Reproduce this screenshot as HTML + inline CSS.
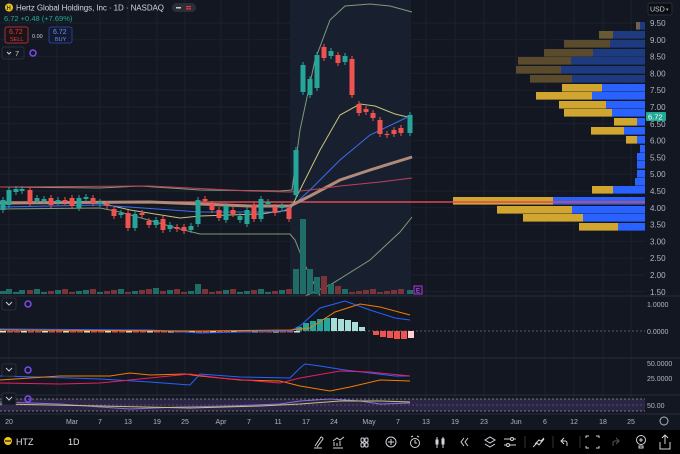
<!DOCTYPE html>
<html><head><meta charset="utf-8"><style>
html,body{margin:0;padding:0;background:#131722;width:680px;height:454px;overflow:hidden;font-family:"Liberation Sans",sans-serif}
svg{display:block}
text{font-family:"Liberation Sans",sans-serif}
</style></head><body>
<svg id="s" width="680" height="454" viewBox="0 0 680 454">
<rect width="680" height="454" fill="#131722"/>
<g id="grid" stroke="#1b202c" stroke-width="1"></g>
<rect x="290" y="0" width="121" height="296" fill="#182030"/>
<g id="vp"></g>
<line x1="0" y1="202" x2="645" y2="202" stroke="#e0494f" stroke-width="1.5"/>
<g id="lines" fill="none"></g>
<g id="vol"></g>
<g id="cdl"></g>
<g stroke="#2a2e39"><line x1="0" y1="296" x2="680" y2="296"/><line x1="0" y1="358" x2="680" y2="358"/><line x1="0" y1="395" x2="680" y2="395"/><line x1="0" y1="414" x2="680" y2="414"/></g>
<line x1="0" y1="331" x2="645" y2="331" stroke="#555a66" stroke-dasharray="2,2"/>
<g id="macd"></g>
<rect x="0" y="399" width="645" height="12" fill="#2a2445"/>
<g stroke="#777" stroke-dasharray="2,2"><line x1="0" y1="399" x2="645" y2="399"/><line x1="0" y1="411" x2="645" y2="411"/><line x1="0" y1="405" x2="645" y2="405" stroke="#555"/></g>
<g id="low" fill="none"></g>
<g fill="#b2b5be" font-size="8" id="ax"></g>
<rect x="646" y="112" width="20" height="9" fill="#22ab94" rx="1"/>
<text x="648" y="119.5" font-size="7.5" fill="#fff">6.72</text>
<rect x="648" y="3" width="24" height="12" fill="#0b0d12" stroke="#2a2e39" rx="2"/>
<text x="650" y="11.5" font-size="7" fill="#d1d4dc">USD</text><text x="666" y="11" font-size="5" fill="#aaa">▾</text>
<circle cx="9" cy="7.5" r="4" fill="#f0c419"/><text x="6.5" y="9.8" font-size="6" fill="#333" font-weight="bold">H</text>
<text x="16" y="10.5" font-size="8" fill="#d1d4dc" textLength="148">Hertz Global Holdings, Inc · 1D · NASDAQ</text>
<rect x="172" y="3" width="24" height="9" rx="4.5" fill="#2a2e39"/><rect x="176" y="7" width="5" height="1.5" fill="#ccc"/><rect x="186" y="6" width="5" height="1.2" fill="#f23645"/><rect x="186" y="8.3" width="5" height="1.2" fill="#f23645"/>
<text x="4" y="21" font-size="7.5" fill="#22ab94">6.72  +0.48 (+7.69%)</text>
<rect x="5" y="27" width="23" height="16" rx="2" fill="#1a1416" stroke="#a0323a"/>
<text x="9" y="34" font-size="7" fill="#f23645">6.72</text><text x="10" y="41" font-size="5.5" fill="#f23645">SELL</text>
<text x="32" y="38" font-size="5.5" fill="#ccc">0.00</text>
<rect x="49" y="27" width="23" height="16" rx="2" fill="#131a2e" stroke="#2a3f8f"/>
<text x="53" y="34" font-size="7" fill="#6f8ff5">6.72</text><text x="55" y="41" font-size="5.5" fill="#6f8ff5">BUY</text>
<rect x="2" y="47" width="22" height="12" rx="2" fill="none" stroke="#2a2e39"/>
<path d="M7 52 l2 2 l2 -2" stroke="#ccc" fill="none"/><text x="15" y="56" font-size="7.5" fill="#ccc">7</text>
<circle cx="33" cy="53" r="3" fill="none" stroke="#7b4cf0" stroke-width="1.5"/>
<g id="pnl"></g>
<rect x="414" y="286" width="8" height="8" fill="#2a1040" stroke="#a040d0"/><text x="416" y="292.5" font-size="6" fill="#c080ff">E</text>
<rect x="0" y="430" width="680" height="24" fill="#000"/>
<circle cx="8" cy="441" r="4" fill="#f0c419"/><rect x="5" y="440.3" width="6" height="1.4" fill="#333"/>
<text x="16" y="445" font-size="9" fill="#e0e3eb">HTZ</text>
<text x="68" y="445" font-size="9" fill="#e0e3eb">1D</text>
<g stroke="#d1d4dc" fill="none" stroke-width="1" id="tb"></g>
</svg>
<script>
const ns="http://www.w3.org/2000/svg";
function el(p,t,a){const e=document.createElementNS(ns,t);for(const k in a)e.setAttribute(k,a[k]);p.appendChild(e);return e;}
const $=id=>document.getElementById(id);
const Y=p=>23+(9.5-p)*33.6;
const g=$("grid");
[9,57,100,128,157,185,221,249,278,306,334,369,398,426,455,484,516,545,574,603,631].forEach(x=>el(g,"line",{x1:x,y1:0,x2:x,y2:414}));
for(let p=1.5;p<=9.5;p+=0.5)el(g,"line",{x1:0,y1:Y(p),x2:645,y2:Y(p)});
const ax=$("ax");
for(let p=1.5;p<=9.51;p+=0.5){el(ax,"text",{x:650,y:Y(p)+3}).textContent=p.toFixed(2);}
[["1.0000",307],["0.0000",334],["50.0000",366],["25.0000",381],["50.00",408]].forEach(a=>el(ax,"text",{x:647,y:a[1],"font-size":7}).textContent=a[0]);
[["20",9],["Mar",72],["7",100],["13",128],["19",157],["25",185],["Apr",221],["7",249],["11",278],["17",306],["24",334],["May",369],["7",398],["13",426],["19",455],["23",484],["Jun",516],["6",545],["12",574],["18",603],["25",631]].forEach(a=>{const t=el(ax,"text",{x:a[1],y:424,"text-anchor":"middle","font-size":7});t.textContent=a[0];});
el(ax,"circle",{cx:664,cy:421,r:4,fill:"none",stroke:"#b2b5be"});
const vp=$("vp");
const rows=[[22,636,640,"#6b6255","#1e3a80"],[31,599,613,"#6a5a33","#1e3a80"],[40,564,610,"#5a4b2d","#1e3a80"],[49,544,593,"#5a4b2d","#1e3a80"],[57,518,571,"#5a4b2d","#1e3a80"],[66,516,561,"#5a4b2d","#1e3a80"],[75,530,572,"#5a4b2d","#1e3a80"],[84,562,602,"#d0a530","#2962ff"],[92,536,592,"#d0a530","#2962ff"],[101,559,606,"#d0a530","#2962ff"],[109,564,612,"#d0a530","#2962ff"],[118,614,637,"#d0a530","#2962ff"],[127,591,624,"#d0a530","#2962ff"],[136,626,637,"#d0a530","#2962ff"],[145,640,640,"#d0a530","#2962ff"],[153,637,637,"#d0a530","#2962ff"],[161,637,637,"#d0a530","#2962ff"],[170,637,637,"#d0a530","#2962ff"],[178,635,635,"#d0a530","#2962ff"],[186,592,613,"#d0a530","#2962ff"],[197,453,553,"#d0a530","#2962ff"],[206,497,572,"#d0a530","#2962ff"],[214,523,583,"#d0a530","#2962ff"],[223,579,618,"#d0a530","#2962ff"]];
rows.forEach(r=>{el(vp,"rect",{x:r[1],y:r[0],width:r[2]-r[1],height:7.6,fill:r[3]});el(vp,"rect",{x:r[2],y:r[0],width:645-r[2],height:7.6,fill:r[4]});});
const C=[[3,200,210,1],[9,190,205,1],[16,189,192,1],[22,189,191,1],[30,190,203,0],[37,198,201,1],[44,199,201,1],[51,198,205,0],[58,200,202,1],[65,200,202,0],[72,198,206,0],[79,198,208,1],[86,197,199,1],[93,198,203,0],[100,202,204,1],[107,204,206,0],[114,209,216,0],[121,213,215,1],[128,213,228,0],[135,214,228,1],[142,213,215,0],[149,221,225,0],[156,220,225,1],[163,219,230,0],[170,225,229,1],[177,227,229,0],[184,227,231,0],[191,226,230,1],[198,200,224,1],[205,199,201,0],[212,204,210,0],[219,210,218,0],[226,206,220,1],[233,210,214,0],[240,216,220,1],[247,210,224,1],[254,205,219,0],[261,199,219,1],[268,202,204,1],[275,207,213,0],[282,206,208,1],[289,208,219,0],[296,150,195,1],[303,65,92,1],[310,79,95,1],[317,55,88,1],[324,47,58,0],[331,51,56,1],[338,55,63,0],[345,56,62,1],[352,59,95,0],[359,104,113,0],[366,109,112,0],[373,113,118,0],[380,120,134,0],[387,134,135,0],[394,130,134,0],[401,128,133,0],[410,115,133,1]];
const cd=$("cdl"),vo=$("vol");
const big={296:25,303:75,310:25,317:17,324:18,331:10,338:8,198:10,156:6,289:5};
C.forEach(c=>{const col=c[3]?"#26a69a":"#ef5350";
el(cd,"line",{x1:c[0],x2:c[0],y1:c[1]-3,y2:c[2]+3,stroke:col});
el(cd,"rect",{x:c[0]-2.5,y:c[1],width:5,height:Math.max(1,c[2]-c[1]),fill:col});
const h=big[c[0]]||(2+((c[0]*7)%4));
el(vo,"rect",{x:c[0]-3,y:294-h,width:6,height:h,fill:c[3]?"#1f6d66":"#7a3438"});});
const L=$("lines");
function pl(pts,col,w){el(L,"polyline",{points:pts,stroke:col,"stroke-width":w||1});}
pl("0,187 100,188 140,186 200,190 280,191 292,190 300,130 315,60 330,20 345,6 370,4 390,6 412,12","#7e9a7a");
pl("0,209 100,208 120,212 180,229 200,234 290,234 295,240 305,265 320,296","#7e9a7a");
pl("305,296 330,285 370,260 400,232 412,217","#7e9a7a");
pl("0,203 100,203 130,210 180,218 200,216 260,214 290,210 300,190 320,150 340,115 360,104 375,106 395,114 412,118","#c8c27a");
pl("0,207 100,205 200,212 280,212 290,208 310,190 340,160 370,135 412,115","#3b6ef5");
pl("0,203 150,202 250,206 290,206 310,196 340,180 370,170 412,157","#b08b7a",3);
pl("0,187 150,186 250,191 290,192 310,190 340,186 380,182 412,178","#c0405a");
const m=$("macd");
for(let x=0;x<300;x+=7){el(m,"rect",{x:x,y:331,width:6,height:1.5,fill:(x/7)%3?"#c05060":"#ddd"});}
[[296,4],[303,8],[310,10],[317,12],[324,13],[331,13],[338,12],[345,11],[352,9],[359,4]].forEach((b,i)=>el(m,"rect",{x:b[0],y:331-b[1],width:6,height:b[1],fill:i<5?"#26a69a":"#a8dcd6"}));
[[373,4],[380,6],[387,7],[394,8],[401,8],[408,7]].forEach((b,i)=>el(m,"rect",{x:b[0],y:331,width:6,height:b[1],fill:i<5?"#ef5350":"#ffcdd2"}));
el(m,"polyline",{points:"0,329 150,330 200,333 290,331 300,326 320,308 345,301 370,310 395,318 410,320",stroke:"#2962ff",fill:"none"});
el(m,"polyline",{points:"0,330 200,331 290,330 310,328 335,312 360,304 380,307 410,315",stroke:"#f57c00",fill:"none"});
const lo=$("low");
el(lo,"polyline",{points:"0,376 40,377 100,379 150,382 190,385 200,374 240,377 290,378 300,368 305,364 320,366 345,370 370,373 395,376 410,376",stroke:"#2962ff"});
el(lo,"polyline",{points:"0,380 60,376 110,376 130,373 150,375 185,374 200,376 240,380 280,381 300,386 330,391 350,387 380,380 410,381",stroke:"#f57c00"});
el(lo,"polyline",{points:"0,383 60,384 100,383 190,374 220,378 280,383 300,378 340,371 370,372 410,376",stroke:"#e91e63"});
el(lo,"polyline",{points:"0,402 60,404 100,407 130,409 180,407 230,406 280,404 300,401 330,399 360,401 380,404 410,403",stroke:"#8e6fd8"});
el(lo,"polyline",{points:"0,404 100,406 190,408 260,406 300,404 340,401 380,401 410,402",stroke:"#c8c27a"});
const pn=$("pnl");
[[303],[369],[398]].forEach(a=>{const y=a[0];el(pn,"rect",{x:2,y:y-5,width:14,height:12,rx:2,fill:"#131722",stroke:"#2a2e39"});el(pn,"path",{d:`M6 ${y-1} l3 3 l3 -3`,stroke:"#ccc",fill:"none"});el(pn,"circle",{cx:28,cy:y+1,r:3,fill:"none",stroke:"#7b4cf0","stroke-width":1.5});});
const tb=$("tb");
el(tb,"path",{d:"M315 446 l6 -9 a2 2 0 0 1 2 2 l-6 8 M314 448 h8"});
el(tb,"path",{d:"M333 448 h10 M334 446 v-4 M337 446 v-3 M340 446 v-5 M333 441 l4 -3 l3 2 l4 -3"});
[[361,438],[365,438],[361,443],[365,443]].forEach(p=>el(tb,"rect",{x:p[0],y:p[1],width:3,height:4,rx:1}));
el(tb,"circle",{cx:391,cy:442,r:5});el(tb,"path",{d:"M388 442 h6 M391 439 v6"});
el(tb,"circle",{cx:415,cy:443,r:4.5});el(tb,"path",{d:"M415 440 v3 h2 M411 437 l2 -1 M419 437 l-2 -1"});
el(tb,"path",{d:"M437 437 v11 M443 437 v11"});el(tb,"rect",{x:436,y:440,width:2,height:4});el(tb,"rect",{x:442,y:439,width:2,height:5});
el(tb,"path",{d:"M464 438 l-3 4 l3 4 M468 438 l-3 4 l3 4"});
el(tb,"path",{d:"M485 440 l5 -3 l5 3 l-5 3 z M485 444 l5 3 l5 -3"});
el(tb,"path",{d:"M504 439 h12 M504 445 h12"});el(tb,"circle",{cx:512,cy:439,r:1.5,fill:"#000"});el(tb,"circle",{cx:508,cy:445,r:1.5,fill:"#000"});
el(tb,"path",{d:"M525 436 v12 M553 436 v12 M580 436 v12",stroke:"#333"});
el(tb,"path",{d:"M533 447 l4 -4 l2 2 l5 -6 M535 444 l4 -4 l2 1 l3 -3"});
el(tb,"path",{d:"M564 438 l-3 3 l3 3 M561 441 h4 a2 2 0 0 1 2 2 v3"});
el(tb,"path",{d:"M586 438 v-2 h3 M596 436 h3 v2 M599 446 v2 h-3 M589 448 h-3 v-2"});
el(tb,"path",{d:"M616 438 l3 3 l-3 3 M619 441 h-4 a2 2 0 0 0 -2 2 v3",stroke:"#555"});
el(tb,"circle",{cx:641,cy:440,r:4.5});el(tb,"path",{d:"M639 446 h4 v2 h-4 z M641 438 v4 M639 440 h4"});
el(tb,"path",{d:"M660 442 v7 h10 v-7 M665 444 v-9 M662 438 l3 -3 l3 3"});
</script>
</body></html>
